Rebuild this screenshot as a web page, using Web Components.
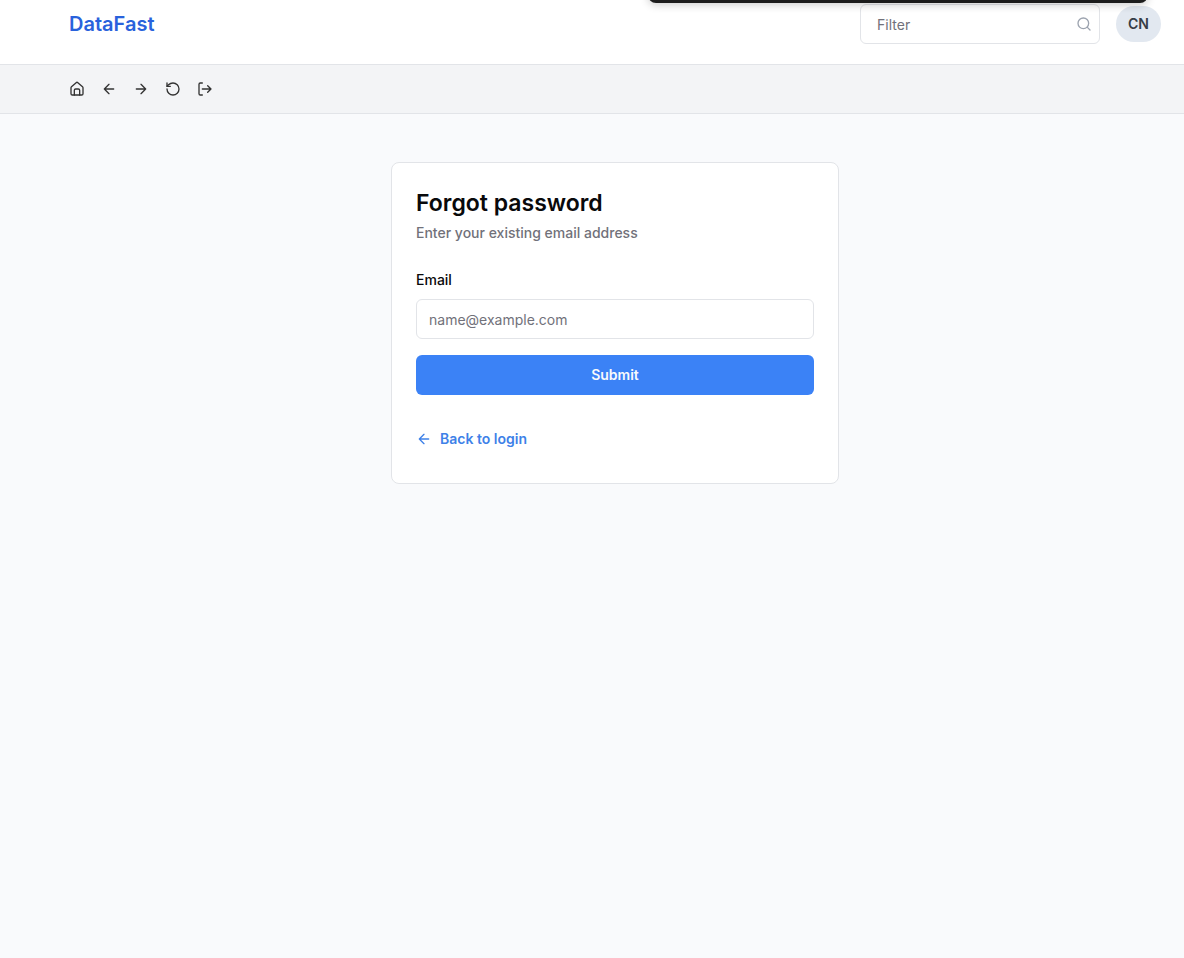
<!DOCTYPE html>
<html lang="en">
<head>
<meta charset="utf-8">
<meta name="viewport" content="width=device-width, initial-scale=1">
<title>DataFast</title>
<style>
body { margin: 0; min-height: 100vh; background: #f9fafc; color: #09090b; font: 500 14px/20px Inter, sans-serif; }
</style>
</head>
<body>
<app-shell>
  <app-header slot="header"></app-header>
  <tool-bar slot="toolbar"></tool-bar>
  <password-card></password-card>
</app-shell>
<script>
const define = (name, html) => customElements.define(name, class extends HTMLElement {
  constructor() {
    super();
    this.attachShadow({ mode: 'open' }).innerHTML = '<style>*{box-sizing:border-box}</style>' + html;
  }
});

const icons = {
  home: '<path d="M8 21v-7a2 2 0 0 1 2-2h4a2 2 0 0 1 2 2v7"/><path d="M3 10a2 2 0 0 1 .7-1.5l7-6a2 2 0 0 1 2.6 0l7 6A2 2 0 0 1 21 10v9a2 2 0 0 1-2 2H5a2 2 0 0 1-2-2z"/>',
  left: '<path d="m12 19-7-7 7-7M19 12H5"/>',
  right: '<path d="M5 12h14M12 5l7 7-7 7"/>',
  reset: '<path d="M3 12a9 9 0 1 0 9-9 9.75 9.75 0 0 0-6.74 2.74L3 8"/><path d="M3 3v5h5"/>',
  exit: '<path d="M8 3H5a2 2 0 0 0-2 2v14a2 2 0 0 0 2 2h3M8 12h13M16 7l5 5-5 5"/>',
  search: '<circle cx="11" cy="11" r="8"/><path d="m21 21-4.3-4.3"/>'
};
customElements.define('line-icon', class extends HTMLElement {
  connectedCallback() {
    if (!this.shadowRoot) this.attachShadow({ mode: 'open' }).innerHTML = `
      <style>:host{display:block;flex:none;width:16px;height:16px}svg{display:block;width:100%;height:100%}</style>
      <svg viewBox="0 0 24 24" fill="none" stroke="currentColor" stroke-width="2" stroke-linecap="round" stroke-linejoin="round" aria-hidden="true">${icons[this.getAttribute('name')]}</svg>`;
  }
});

define('app-shell', `
  <style>
    :host { display: block; position: relative; }
    main { display: flex; justify-content: center; padding: 48px 23px 48px 69px; }
    .edge { position: absolute; top: -21px; right: 36px; width: 500px; max-width: 80%; height: 24px;
      background: #1c1c1c; border-radius: 8px; box-shadow: 0 2px 8px rgb(0 0 0 / .2); }
  </style>
  <slot name="header"></slot>
  <slot name="toolbar"></slot>
  <main><slot></slot></main>
  <div class="edge"></div>`);

define('app-header', `
  <style>
    :host { display: block; background: #fff; border-bottom: 1px solid #e2e4e8; }
    header { display: flex; align-items: center; height: 64px; padding: 0 23px 16px 69px; }
    .brand { margin-right: auto; color: #2962dc; font: 600 20px/28px Inter, sans-serif; text-decoration: none; }
    .filter { position: relative; display: flex; width: 240px; color: #9ca3af; }
    .filter line-icon { position: absolute; top: 12px; right: 8px; }
    input { width: 100%; height: 40px; padding: 0 32px 0 16px; border: 1px solid #e2e4e8; border-radius: 6px; background: #fff; color: #09090b; font: 400 14px/20px Inter, sans-serif; }
    input::placeholder { color: #71717a; opacity: 1; }
    .avatar { height: 36px; margin-left: 16px; padding: 0 12px; border: 0; border-radius: 18px; background: #e2e8f0; color: #363c45; font: 600 14px/20px Inter, sans-serif; }
  </style>
  <header>
    <a class="brand" href="#">DataFast</a>
    <label class="filter"><input type="text" placeholder="Filter" aria-label="Filter"><line-icon name="search"></line-icon></label>
    <button class="avatar" type="button">CN</button>
  </header>`);

define('tool-bar', `
  <style>
    :host { display: block; background: #f3f4f6; border-bottom: 1px solid #e2e4e8; }
    nav { display: flex; align-items: center; gap: 16px; height: 48px; padding: 0 23px 0 69px; }
    button { padding: 0; border: 0; background: none; color: #333; }
  </style>
  <nav aria-label="Page">
    <button type="button" aria-label="Home"><line-icon name="home"></line-icon></button>
    <button type="button" aria-label="Back"><line-icon name="left"></line-icon></button>
    <button type="button" aria-label="Forward"><line-icon name="right"></line-icon></button>
    <button type="button" aria-label="Reload"><line-icon name="reset"></line-icon></button>
    <button type="button" aria-label="Log out"><line-icon name="exit"></line-icon></button>
  </nav>`);

define('password-card', `
  <style>
    :host { display: block; width: 100%; max-width: 448px; box-sizing: border-box; padding: 24px; background: #fff; border: 1px solid #e2e4e8; border-radius: 8px; }
    h1 { margin: 0; font: 600 23px/32px Inter, sans-serif; }
    p { margin: 4px 0 0; color: #71717a; }
    form { display: grid; margin-top: 24px; }
    label { line-height: 26px; }
    input { height: 40px; width: 100%; margin: 6px 0 16px; padding: 0 12px; border: 1px solid #e2e4e8; border-radius: 6px; background: #fff; color: #09090b; font: 400 14px/20px Inter, sans-serif; }
    input::placeholder { color: #71717a; opacity: 1; }
    button { height: 40px; border: 0; border-radius: 6px; background: #3b82f6; color: #f8fafc; font: 600 14px/20px Inter, sans-serif; }
    a { display: flex; align-items: center; gap: 8px; width: max-content; height: 40px; margin-top: 24px; color: #3e81e8; font-weight: 600; text-decoration: none; }
  </style>
  <h1>Forgot password</h1>
  <p>Enter your existing email address</p>
  <form>
    <label for="email">Email</label>
    <input id="email" type="email" placeholder="name@example.com">
    <button type="submit">Submit</button>
  </form>
  <a href="#"><line-icon name="left"></line-icon>Back to login</a>`);
</script>
</body>
</html>
